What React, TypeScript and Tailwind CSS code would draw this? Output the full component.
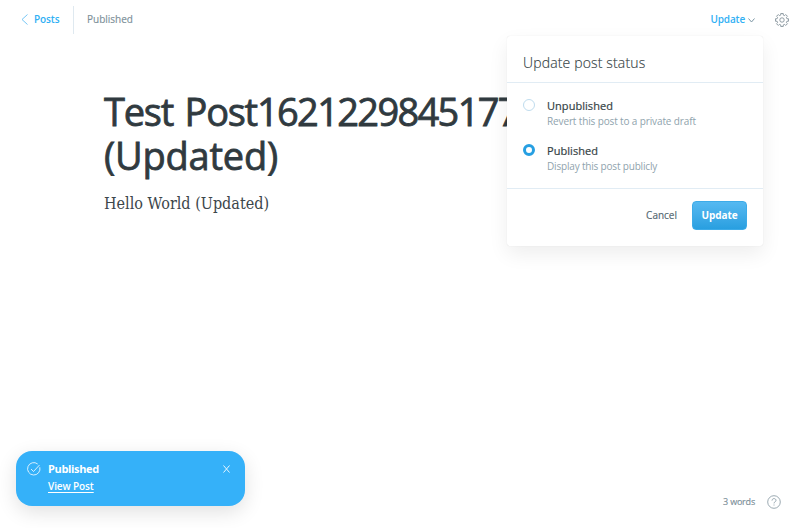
import React from "react";

function Option({ label, hint, checked, labelClass, hintClass }: { label: string; hint: string; checked?: boolean; labelClass: string; hintClass: string }) {
  return (
    <div className="flex h-[45px] items-start">
      <span className={checked ? "mt-[1px] size-3 rounded-full border-[3px] border-[#269fe2] bg-white" : "mt-[1px] size-3 rounded-full border border-[#bfdcee] bg-white"} />
      <div className="ml-3 whitespace-nowrap">
        <div className={`h-4 text-[11px] leading-4 text-[#343f44] [-webkit-text-stroke:0.2px_#343f44] ${labelClass}`}>{label}</div>
        <div className={`-mt-px h-4 text-[10px] leading-4 text-[#8fa3ad] ${hintClass}`}>{hint}</div>
      </div>
    </div>
  );
}

const TOOTH_ANGLES = [0, 45, 90, 135, 180, 225, 270, 315];

function Gear() {
  const points = TOOTH_ANGLES.flatMap((angle) =>
    [[-14, 8.7], [-11, 11.3], [11, 11.3], [14, 8.7]].map(([offset, radius]) => {
      const t = ((angle + offset - 90) * Math.PI) / 180;
      return `${(12 + radius * Math.cos(t)).toFixed(2)},${(12 + radius * Math.sin(t)).toFixed(2)}`;
    }),
  ).join(" ");
  return (
    <svg viewBox="0 0 24 24" className="size-[14px]" fill="none" stroke="#71828b" strokeWidth="1.3" strokeLinejoin="round">
      <circle cx="12" cy="12" r="3.8" />
      <polygon points={points} />
    </svg>
  );
}

export default function App() {
  return (
    <div className="relative flex h-[528px] w-[800px] flex-col overflow-hidden bg-white font-['Open_Sans','Noto_Sans',sans-serif]">
      <header className="flex h-[39px] shrink-0 items-center pl-[21px] pr-[11.5px] text-[10px] whitespace-nowrap">
        <svg viewBox="0 0 7 11" className="h-[11px] w-[7px]" fill="none" stroke="#55b9f2" strokeWidth="0.8"><path d="M6.5.5 1 5.5l5.500 5" /></svg>
        <span className="ml-[6px] w-[39px] font-semibold tracking-[-0.1px] text-[#30b0f4]">Posts</span>
        <span className="h-7 w-px bg-[#dfe9f0]" />
        <span className="ml-[13px] text-[#7c8f99] [-webkit-text-stroke:0.15px_#7c8f99]">Published</span>
        <span className="ml-auto font-semibold tracking-[-0.15px] text-[#30b0f4]">Update</span>
        <svg viewBox="0 0 7 5" className="mt-px ml-[2.5px] h-[5px] w-[7px]" fill="none" stroke="#7c97a5"><path d="m.5.5 3 3.500 3-3.500" /></svg>
        <span className="ml-5"><Gear /></span>
      </header>
      <main className="pl-[104px] pt-[50px] text-[#303a3f]">
        <h1 className="text-[38px] leading-[44px] font-normal whitespace-nowrap [-webkit-text-stroke:0.8px_#303a3f]">
          <span className="block h-11"><span className="tracking-[-1.25px] [word-spacing:3px]">Test Post</span><span className="tracking-[-1.65px]">1621229845177</span></span>
          <span className="block h-11 tracking-[-0.2px]">(Updated)</span>
        </h1>
        <p className="mt-[15px] font-['DejaVu_Serif_Condensed','DejaVu_Serif',serif] text-[16px] leading-6 whitespace-nowrap text-[#3c464b]">Hello World (Updated)</p>
      </main>

      <section className="absolute top-9 left-[507px] h-[210px] w-64 rounded-[3px] bg-white shadow-[0_0_1px_rgba(0,0,0,0.14),0_8px_20px_rgba(0,0,0,0.07)]">
        <h2 className="h-[47px] border-b border-[#e1ecf4] px-4 pt-4 text-[14px] leading-[22px] font-light tracking-[0.15px] whitespace-nowrap text-[#343f44] [-webkit-text-stroke:0.15px_#343f44]">Update post status</h2>
        <div className="h-[106px] border-b border-[#e1ecf4] px-4 pt-[15px]">
          <Option label="Unpublished" hint="Revert this post to a private draft" labelClass="tracking-[0.05px]" hintClass="tracking-[-0.13px]" />
          <Option label="Published" hint="Display this post publicly" checked labelClass="tracking-[0.05px]" hintClass="tracking-[-0.18px]" />
        </div>
        <footer className="flex justify-end pt-3 pr-4 text-[10px]">
          <button className="mr-[15px] text-[#536771] [-webkit-text-stroke:0.15px_#536771]">Cancel</button>
          <button className="h-[29px] w-[55px] rounded-[4px] border border-[#3dabe8] bg-linear-to-b from-[#55b9f1] to-[#289fe0] font-bold tracking-[-0.1px] text-white">Update</button>
        </footer>
      </section>

      <aside className="absolute top-[451px] left-4 flex h-[55px] w-[229px] rounded-[16px] bg-[#35b1f9] pt-[11px] pl-[11px] text-white shadow-[0_6px_20px_rgba(0,0,0,0.12)]">
        <svg viewBox="0 0 14 14" className="size-[14px]" fill="none" stroke="white" strokeWidth="0.8"><path d="M12.800 5.300A6.200 6.200 0 1 1 10.700 2" /><path d="m4 7 2.500 2.500L12.500 3" /></svg>
        <div className="ml-[7px] -mt-px whitespace-nowrap">
          <div className="text-[11px] leading-4 font-bold tracking-[-0.35px]">Published</div>
          <div className="mt-px text-[10px] leading-4 font-semibold tracking-[-0.1px] underline underline-offset-[2px]">View Post</div>
        </div>
        <svg viewBox="0 0 7 8" className="absolute top-[14px] left-[207px] h-[8px] w-[7px]" fill="none" stroke="#e8f6ff" strokeWidth="1"><path d="m.5.5 6 7m0-7-6 7" /></svg>
      </aside>

      <footer className="mt-auto flex h-[52px] items-center justify-end pr-[19px] text-[#7c8f99]">
        <span className="text-[9px] tracking-[-0.2px] [-webkit-text-stroke:0.15px_#7c8f99]">3 words</span>
        <svg viewBox="0 0 14 14" className="ml-3 size-[14px]" fill="none" stroke="#81949e" strokeWidth="0.8"><circle cx="7" cy="7" r="6.300" /><path d="M5 5.600C5 2.900 9 3 9 5.400c0 1.500-2 1.300-2 3M7 9.500v1" /></svg>
      </footer>
    </div>
  );
}
